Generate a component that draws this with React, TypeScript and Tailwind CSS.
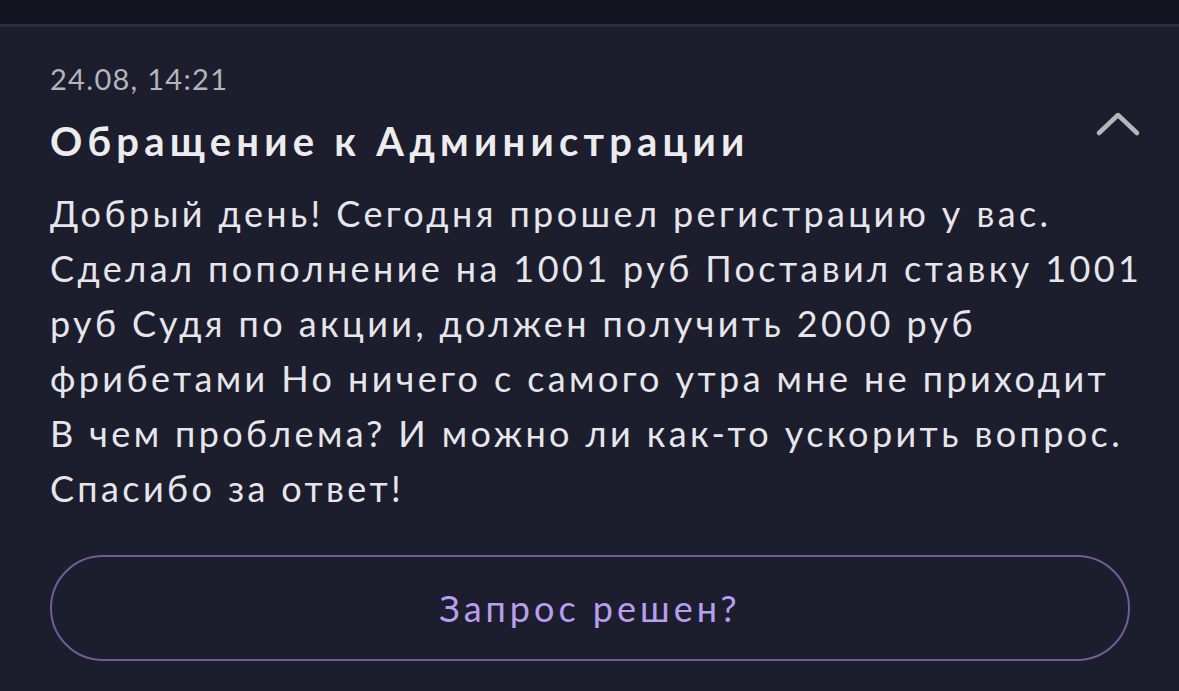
import React from "react";

export default function App() {
  const font = { fontFamily: '"Lato", "Noto Sans", sans-serif' };
  return (
    <div className="w-[1179px] h-[691px] bg-[#1c1d2d] overflow-hidden" style={font}>
      <div className="h-[24px] bg-[#131621]" />
      <div className="h-[3px] bg-[#2a2c42]" />
      <div className="pl-[50px] pr-[38px] pt-[34px]">
        <div className="flex justify-between">
          <div>
            <div className="text-[29px] leading-[36px] tracking-[1.3px] text-[#b4b4bb] whitespace-nowrap">24.08, 14:21</div>
            <div className="mt-[20px] text-[40px] leading-[48px] tracking-[5.2px] font-bold text-[#ececee] whitespace-nowrap">
              Обращение к Администрации
            </div>
          </div>
          <svg width="46" height="26" viewBox="0 0 46 26" className="mt-[50px]">
            <path d="M4 22 L23 4 L42 22" fill="none" stroke="#b5b5ba" strokeWidth="4.5" strokeLinecap="round" strokeLinejoin="round" />
          </svg>
        </div>
        <div className="mt-[21px] text-[36px] leading-[55px] tracking-[3.4px] text-[#e6e6ea] whitespace-nowrap">
          <div>Добрый день! Сегодня прошел регистрацию у вас.</div>
          <div>Сделал пополнение на 1001 руб Поставил ставку 1001</div>
          <div>руб Судя по акции, должен получить 2000 руб</div>
          <div>фрибетами Но ничего с самого утра мне не приходит</div>
          <div>В чем проблема? И можно ли как-то ускорить вопрос.</div>
          <div>Спасибо за ответ!</div>
        </div>
        <div className="mt-[39px] mr-[11px] h-[106px] border-2 border-[#6e5f96] rounded-full flex items-center justify-center">
          <span className="text-[36px] tracking-[4px] text-[#b99df0]">Запрос решен?</span>
        </div>
      </div>
    </div>
  );
}
